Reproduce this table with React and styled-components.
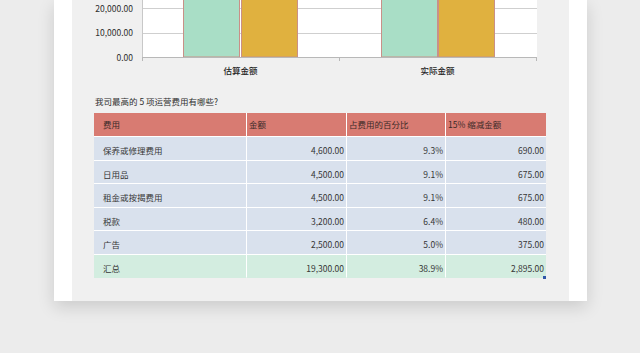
import React from "react";
import styled, { createGlobalStyle } from "styled-components";

const GlobalStyle = createGlobalStyle`
  html, body { margin: 0; padding: 0; background: #ececec; }
  body {
    font-family: "Noto Sans CJK SC", "Noto Sans", sans-serif;
    color: #333;
  }
`;

const Page = styled.div`
  width: 640px;
  height: 353px;
  overflow: hidden;
  background: #ececec;
  padding-left: 54px;
  box-sizing: border-box;
`;

const Paper = styled.div`
  width: 533px;
  height: 301px;
  background: #fff;
  padding: 0 18px;
  box-sizing: border-box;
  box-shadow: 0 6px 16px rgba(0, 0, 0, 0.14);
`;

const Sheet = styled.div`
  height: 100%;
  background: #f0f0f0;
  display: flex;
  flex-direction: column;
  font-size: 8.5px;
`;

const ChartRow = styled.div`
  display: flex;
  gap: 9px;
  height: 61px;
`;

const YAxis = styled.div`
  width: 61px;
  display: flex;
  flex-direction: column;
  align-items: flex-end;
  gap: 14.5px;
  padding-top: 2.5px;
  line-height: 10px;
  color: #2e2e2e;
`;

const CategoryRow = styled.div`
  display: flex;
  margin-left: 70px;
  width: 394px;
  margin-top: 3px;
  line-height: 12px;
`;

const Category = styled.div`
  flex: 1;
  text-align: center;
  color: #1e1e1e;
  font-weight: 500;
`;

const Question = styled.div`
  margin: 19px 0 0 23px;
  line-height: 12px;
  color: #2e2e2e;
  height: 12px;
`;

const Table = styled.div`
  position: relative;
  margin: 6px 0 0 22px;
  width: 452px;
  display: grid;
  grid-template-columns: 153px 100px 99px 100px;
`;

const Cell = styled.div`
  box-sizing: border-box;
  height: ${(p) => (p.$head ? "24px" : "23.5px")};
  background: ${(p) => (p.$head ? "#d87b72" : p.$total ? "#d3ede0" : "#d9e1ed")};
  border-right: ${(p) => (p.$last ? "none" : "1px solid #fff")};
  border-bottom: 1px solid ${(p) => (p.$total ? "#d3ede0" : "#fff")};
  display: flex;
  align-items: ${(p) => (p.$head ? "center" : "flex-end")};
  justify-content: ${(p) => (p.$num ? "flex-end" : "flex-start")};
  padding: ${(p) => (p.$head ? "0 0 0 2px" : "0 2px 3.5px 2px")};
  padding-left: ${(p) => (p.$first ? "9px" : "2px")};
  line-height: 11px;
  color: ${(p) => (p.$head ? "#3a2a28" : "#363636")};
  white-space: nowrap;
`;

const Handle = styled.div`
  position: absolute;
  right: 0;
  bottom: -1px;
  width: 3px;
  height: 3px;
  background: #2f56a8;
`;

const headers = ["费用", "金额", "占费用的百分比", "15% 缩减金额"];
const rows = [
  ["保养或修理费用", "4,600.00", "9.3%", "690.00"],
  ["日用品", "4,500.00", "9.1%", "675.00"],
  ["租金或按揭费用", "4,500.00", "9.1%", "675.00"],
  ["税款", "3,200.00", "6.4%", "480.00"],
  ["广告", "2,500.00", "5.0%", "375.00"],
];
const total = ["汇总", "19,300.00", "38.9%", "2,895.00"];

function Plot() {
  const bars = [
    { x: 41, fill: "#a9dec6" },
    { x: 99, fill: "#e0b13f" },
    { x: 239, fill: "#a9dec6" },
    { x: 296, fill: "#e0b13f" },
  ];
  return (
    <svg width="396" height="61" viewBox="0 0 396 61" style={{ display: "block" }}>
      <rect x="0" y="0" width="395" height="57" fill="#fff" />
      <line x1="0" y1="8.5" x2="395" y2="8.5" stroke="#cfcfcf" />
      <line x1="0" y1="33.5" x2="395" y2="33.5" stroke="#cfcfcf" />
      <line x1="0.5" y1="0" x2="0.5" y2="57" stroke="#c8c8c8" />
      {bars.map((b, i) => (
        <rect key={i} x={b.x + 0.5} y="-2" width="56" height="59" fill={b.fill} stroke="#c99088" strokeWidth="1" />
      ))}
      <line x1="0" y1="57.5" x2="395" y2="57.5" stroke="#b8b8b8" />
      <line x1="0.5" y1="57" x2="0.5" y2="61" stroke="#b8b8b8" />
      <line x1="197.5" y1="57" x2="197.5" y2="61" stroke="#b8b8b8" />
      <line x1="394.5" y1="57" x2="394.5" y2="61" stroke="#b8b8b8" />
    </svg>
  );
}

export default function App() {
  return (
    <>
      <GlobalStyle />
      <Page>
        <Paper>
          <Sheet>
            <ChartRow>
              <YAxis>
                <span>20,000.00</span>
                <span>10,000.00</span>
                <span>0.00</span>
              </YAxis>
              <Plot />
            </ChartRow>
            <CategoryRow>
              <Category>估算金额</Category>
              <Category>实际金额</Category>
            </CategoryRow>
            <Question>我司最高的 5 项运营费用有哪些?</Question>
            <Table>
              {headers.map((h, i) => (
                <Cell key={h} $head $first={i === 0} $last={i === 3}>
                  {h}
                </Cell>
              ))}
              {rows.map((r) =>
                r.map((c, i) => (
                  <Cell key={r[0] + i} $num={i > 0} $first={i === 0} $last={i === 3}>
                    {c}
                  </Cell>
                ))
              )}
              {total.map((c, i) => (
                <Cell key={"t" + i} $total $num={i > 0} $first={i === 0} $last={i === 3}>
                  {c}
                </Cell>
              ))}
              <Handle />
            </Table>
          </Sheet>
        </Paper>
      </Page>
    </>
  );
}
